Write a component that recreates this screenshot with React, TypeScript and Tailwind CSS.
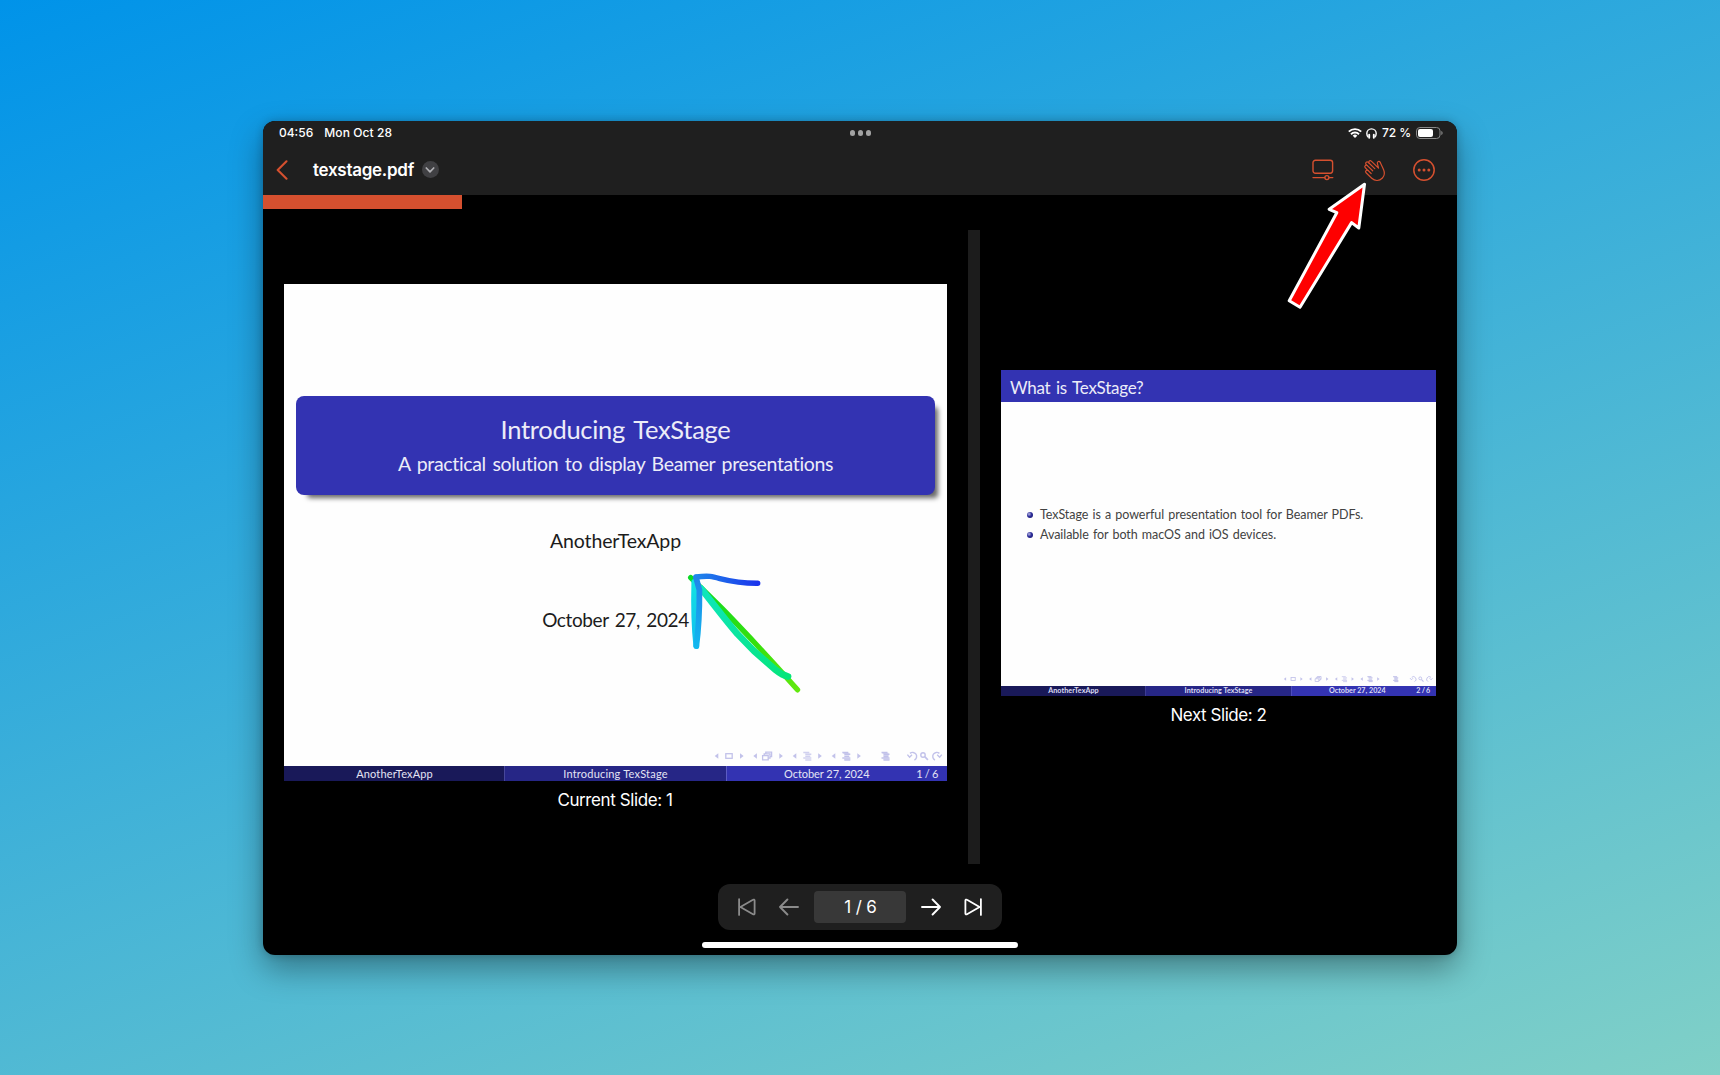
import type { ReactNode } from "react";

const ACCENT = "#d5502f";

function Triangle({ x, dir }: { x: number; dir: "left" | "right" }) {
  return <path d={dir === "left" ? `M${x + 3.6} 3.2v5.6L${x} 6z` : `M${x} 3.2v5.6L${x + 3.6} 6z`} fill="currentColor" />;
}

function Lines({ x, level }: { x: number; level: number }) {
  return (
    <g stroke="currentColor" strokeWidth="1.5" opacity={level === 0 ? 0.75 : 1}>
      <path d={`M${x} 2.4h6M${x + 2} 4.3h6M${x + 2} 6.2h5M${x} 8.1h8M${x + 2} 10h6`} />
      {level > 0 && <path d={`M${x + 1} 3.3h6M${x + 2} 9.1h6`} strokeWidth="0.8" />}
      {level > 1 && <path d={`M${x + 2} 5.2h5M${x + 2} 7.2h5`} strokeWidth="0.8" />}
    </g>
  );
}

function NavSymbols({ className }: { className: string }) {
  return (
    <svg viewBox="0 0 232 12" className={`${className} text-[#c2c2ea]`} fill="none">
      <Triangle x={2.7} dir="left" />
      <rect x="13.8" y="3.7" width="6.4" height="4.6" stroke="currentColor" strokeWidth="1.3" />
      <Triangle x={28} dir="right" />
      <Triangle x={41.3} dir="left" />
      <g stroke="currentColor" strokeWidth="1.3">
        <path d="M50.6 5.6h5.6v4.2h-5.6zM52.2 5.4V3.8h5.8V8.2h-1.6M53.8 3.6V2.2h5.8v4.4H58" />
      </g>
      <Triangle x={67.3} dir="right" />
      <Triangle x={80.7} dir="left" />
      <Lines x={91.3} level={0} />
      <Triangle x={106.2} dir="right" />
      <Triangle x={119.7} dir="left" />
      <Lines x={130.3} level={1} />
      <Triangle x={145.3} dir="right" />
      <Lines x={169.5} level={2} />
      <g stroke="currentColor" strokeWidth="1.4">
        <path d="M198 3.4A4 4 0 1 1 202.4 10M195.4 4.6l2.2 2.6 2.4-2.4" />
        <circle cx="211" cy="5" r="2.2" />
        <path d="M212.7 6.7l3.2 3.2" strokeWidth="1.7" />
        <path d="M227.4 3.4A4 4 0 1 0 223 10M229.8 4.6l-2.2 2.6-2.4-2.4" />
      </g>
    </svg>
  );
}

function StatusBar() {
  return (
    <div className="grid h-6 grid-cols-3 items-center pr-[14px] pl-4 text-[12px] leading-none font-medium text-white">
      <div className="flex gap-[11px]">
        <span>04:56</span>
        <span className="tracking-[0.1px]">Mon Oct 28</span>
      </div>
      <div className="mr-px flex justify-center gap-[2.4px]">
        <span className="size-[5.6px] rounded-full bg-[#a2a2a2]" />
        <span className="size-[5.6px] rounded-full bg-[#a2a2a2]" />
        <span className="size-[5.6px] rounded-full bg-[#a2a2a2]" />
      </div>
      <div className="flex items-center justify-end gap-[4px]">
        <svg viewBox="0 0 14 10" className="h-[10px] w-[14px]" fill="none" stroke="#fff" strokeWidth="1.9">
          <path d="M.8 3.7a8.8 8.8 0 0 1 12.4 0" />
          <path d="M3 6.2a5.7 5.7 0 0 1 8 0" />
          <path d="M4.7 7.7a3.3 3.3 0 0 1 4.6 0L7 10z" fill="#fff" stroke="none" />
        </svg>
        <svg viewBox="0 0 11 11" className="h-[11px] w-[11px]" fill="none" stroke="#fff" strokeWidth="1.4">
          <path d="M2.3 9.3C1.100 8.200.8 6.900.8 5.600a4.700 4.700 0 0 1 9.400 0c0 1.300-.3 2.600-1.500 3.700" />
          <path d="M3.200 6.800v3M7.800 6.800v3" strokeWidth="1.900" strokeLinecap="round" />
        </svg>
        <span className="ml-[1px] tracking-[-0.1px]">72 %</span>
        <svg viewBox="0 0 27 12" className="ml-px h-3 w-[27px]" fill="none">
          <rect x=".5" y=".5" width="23.5" height="11" rx="3.4" stroke="#8a8a8a" />
          <rect x="2" y="2" width="15" height="8" rx="2" fill="#fff" />
          <path d="M25.3 4v4c.8-.3 1.300-1.100 1.300-2s-.5-1.700-1.300-2z" fill="#8a8a8a" />
        </svg>
      </div>
    </div>
  );
}

function TitleBar() {
  return (
    <div className="flex h-[50px] items-center pr-[22px] pb-px pl-[13px]">
      <svg viewBox="0 0 12 20" className="h-5 w-3" fill="none" stroke={ACCENT} strokeWidth="2.1" strokeLinecap="round" strokeLinejoin="round">
        <path d="M10.500 1.300L1.700 10l8.800 8.700" />
      </svg>
      <span className="ml-[25px] pt-px text-[17px] leading-6 font-semibold tracking-[-0.28px] text-white">texstage.pdf</span>
      <span className="ml-[8px] flex size-[17px] items-center justify-center rounded-full bg-[#404043]">
        <svg viewBox="0 0 10 6" className="mt-[1px] h-[6px] w-[10px]" fill="none" stroke="#b0b0b4" strokeWidth="1.7" strokeLinecap="round" strokeLinejoin="round">
          <path d="M1.300 1L5 4.800 8.700 1" />
        </svg>
      </span>
      <div className="ml-auto flex items-center">
        <svg viewBox="0 0 22 22" className="size-[22px]" fill="none" stroke={ACCENT} strokeWidth="1.4" strokeLinecap="round">
          <rect x="1" y="1.2" width="19.6" height="13" rx="2.4" />
          <path d="M1 18.600h11.500M17.300 18.600h3.500" />
          <circle cx="14.9" cy="18.6" r="2" />
        </svg>
        <svg viewBox="0 0 24 24" className="ml-[30px] size-6 overflow-visible" fill="none" stroke={ACCENT} strokeWidth="1.2" strokeLinecap="round" strokeLinejoin="round">
          <g transform="translate(-0.8 -0.4) rotate(-46 12 12)">
            <path d="M3.400 15.500V7.600a1.500 1.500 0 0 1 3 0V3.600a1.500 1.500 0 0 1 3 0V1.900a1.500 1.500 0 0 1 3 0V3.300a1.500 1.500 0 0 1 3 0V13.400l2.600-4.200c1-1.500 3.300-.5 2.700 1.400-1 2.700-1.900 5.200-3 7.600-1.300 2.900-3.500 4.800-6.700 4.800-4.500 0-7.600-3-7.600-7.500z" />
            <path d="M6.400 7.400v4.400M9.400 3.600v7.400M12.400 3.300v7.700" />
          </g>
        </svg>
        <svg viewBox="0 0 22 22" className="ml-[25px] size-[22px]" fill="none" stroke={ACCENT} strokeWidth="1.5">
          <circle cx="11" cy="11" r="10.2" />
          <g fill={ACCENT} stroke="none">
            <circle cx="6.2" cy="11" r="1.5" />
            <circle cx="11" cy="11" r="1.5" />
            <circle cx="15.8" cy="11" r="1.5" />
          </g>
        </svg>
      </div>
    </div>
  );
}

function PointerArrow() {
  return (
    <svg viewBox="0 0 86 132" className="absolute top-[58px] left-[1020px] h-[132px] w-[86px]" fill="#fe0000" stroke="#fff" strokeWidth="3" strokeLinejoin="round">
      <path d="M81.500 5.200L46.200 30.300l7.600 3.400L6.200 121.700l10.800 6.600L68.600 43.600l7.200 5.400z" />
    </svg>
  );
}

function InkDrawing() {
  return (
    <svg viewBox="0 0 120 130" className="absolute top-[286px] left-[400px] h-[130px] w-[120px]" fill="none" strokeWidth="5.4" strokeLinecap="round" strokeLinejoin="round">
      <defs>
        <linearGradient id="green" x1="0" y1="0" x2="1" y2="1">
          <stop offset="0" stopColor="#0bd926" />
          <stop offset="0.6" stopColor="#36e00c" />
          <stop offset="1" stopColor="#62e80e" />
        </linearGradient>
        <linearGradient id="teal" x1="0" y1="0" x2="1" y2="1">
          <stop offset="0" stopColor="#0fe6bd" />
          <stop offset="1" stopColor="#04e57c" />
        </linearGradient>
        <linearGradient id="blue" x1="12" y1="0" x2="74" y2="0" gradientUnits="userSpaceOnUse">
          <stop offset="0" stopColor="#1f86ea" />
          <stop offset="1" stopColor="#1b34ec" />
        </linearGradient>
        <linearGradient id="cyan" x1="0" y1="12" x2="0" y2="78" gradientUnits="userSpaceOnUse">
          <stop offset="0" stopColor="#12e2e2" />
          <stop offset="1" stopColor="#12bdf0" />
        </linearGradient>
        <linearGradient id="sky" x1="0" y1="8" x2="0" y2="78" gradientUnits="userSpaceOnUse">
          <stop offset="0" stopColor="#1f86ea" />
          <stop offset="1" stopColor="#12b8ee" />
        </linearGradient>
      </defs>
      <path d="M6.700 7.600L37 37.500C48 48.500 58 59.500 70 72L93 97 113.500 119.800" stroke="url(#green)" />
      <path d="M104 106.500c-5-1.200-8-3-12-6.300L70 81 53.500 64C43 52 31 36 17 18.500" stroke="url(#teal)" strokeWidth="6.8" />
      <path d="M10.300 12C10 24 10 55 12.300 76" stroke="url(#cyan)" strokeWidth="5.8" />
      <path d="M12.300 76C14.800 58 15.500 34 15.400 20L12 7.500" stroke="url(#sky)" strokeWidth="5.8" />
      <path d="M12 7c5-.6 9-1 14-.6C37 8 47 13.500 73.700 13.300" stroke="url(#blue)" />
    </svg>
  );
}

function CurrentSlide() {
  return (
    <div className="relative flex h-[497px] w-[663px] flex-col bg-[#fefefe] font-['Lato',sans-serif] text-[#1c1c1c]">
      <div className="mx-3 mt-[112px] flex h-[99px] flex-col items-center rounded-[8px] bg-[#3333b2] pt-[17px] whitespace-nowrap text-[#ececf8] shadow-[7px_7px_5px_-4px_rgba(0,0,0,0.6)]">
        <div className="text-[25.5px] leading-8 tracking-[-0.3px] [word-spacing:3px]">Introducing TexStage</div>
        <div className="mt-[5px] text-[19.5px] leading-7 tracking-[-0.35px] [word-spacing:2px]">
          A practical solution to display Beamer presentations
        </div>
      </div>
      <div className="mt-[32px] text-center text-[19.5px] leading-7 tracking-[-0.12px]">AnotherTexApp</div>
      <div className="mt-[51px] text-center text-[19px] leading-7 tracking-[-0.4px] [word-spacing:2px]">October 27, 2024</div>
      <NavSymbols className="mt-auto mr-[3px] mb-1 h-3 w-[232px] self-end" />
      <div className="grid h-[15px] grid-cols-3 text-center text-[11px] leading-[15px] text-[#e4e4f4]">
        <div className="bg-[#191959] tracking-[0.15px]">AnotherTexApp</div>
        <div className="-ml-px border-l border-[#47479a] bg-[#262686] tracking-[0.2px]">Introducing TexStage</div>
        <div className="flex border-l border-[#5c5cc4] bg-[#3333b2]">
          <span className="ml-[57px] tracking-[-0.05px]">October 27, 2024</span>
          <span className="mr-[9px] ml-auto tracking-[-0.3px]">1 / 6</span>
        </div>
      </div>
      <InkDrawing />
    </div>
  );
}

function Bullet({ children }: { children: ReactNode }) {
  return (
    <li className="flex h-[20px] items-center gap-[7px]">
      <span className="size-[6px] rounded-full bg-[radial-gradient(circle_at_35%_35%,#b9b9e6_0%,#2c2c98_45%,#15156a_100%)]" />
      {children}
    </li>
  );
}

function NextSlide() {
  return (
    <div className="flex h-[326px] w-[435px] flex-col bg-[#fefefe] font-['Lato',sans-serif] whitespace-nowrap text-[#424242]">
      <div className="h-8 bg-[#3333b2] pl-[9px] text-[17px] leading-[35px] tracking-[-0.25px] text-[#ececf8] [word-spacing:1.5px]">
        What is TexStage?
      </div>
      <ul className="mt-[103px] ml-[26px] text-[12.5px] tracking-[-0.05px] [word-spacing:1px]">
        <Bullet>TexStage is a powerful presentation tool for Beamer PDFs.</Bullet>
        <Bullet>Available for both macOS and iOS devices.</Bullet>
      </ul>
      <NavSymbols className="mt-auto mr-[2px] mb-[3px] h-[8px] w-[152px] self-end" />
      <div className="grid h-[10px] grid-cols-3 grid-rows-[10px] text-center text-[7.2px] leading-[10px] font-bold text-[#dcdcf2]">
        <div className="bg-[#191959] tracking-[0.05px]">AnotherTexApp</div>
        <div className="-ml-px border-l border-[#3c3c94] bg-[#262686] tracking-[0.05px]">Introducing TexStage</div>
        <div className="flex border-l border-[#4c4cbc] bg-[#3333b2]">
          <span className="ml-[37px]">October 27, 2024</span>
          <span className="mr-[6px] ml-auto tracking-[-0.3px]">2 / 6</span>
        </div>
      </div>
    </div>
  );
}

function SkipIcon({ className }: { className: string }) {
  return (
    <svg viewBox="0 0 18 18" className={`h-[18px] w-[18px] ${className}`} fill="none" stroke="currentColor" strokeWidth="1.8" strokeLinecap="round" strokeLinejoin="round">
      <path d="M1.400 2.600v12.800c0 .9.800 1.300 1.600.8L15.600 9 3 1.800c-.8-.5-1.600-.1-1.600.8zM16.900 1.100v15.800" />
    </svg>
  );
}

function ArrowIcon({ className }: { className: string }) {
  return (
    <svg viewBox="0 0 20 18" className={`h-[18px] w-5 ${className}`} fill="none" stroke="currentColor" strokeWidth="1.9" strokeLinecap="round" strokeLinejoin="round">
      <path d="M1 9h18M11.600 1.500L19 9l-7.400 7.500" />
    </svg>
  );
}

function Pager() {
  return (
    <div className="mx-auto mt-5 flex h-[46px] w-[284px] items-center rounded-[12px] bg-[#1f1f1f] text-white">
      <SkipIcon className="ml-[20px] rotate-180 text-[#8b8b8b]" />
      <ArrowIcon className="ml-[23px] rotate-180 text-[#8b8b8b]" />
      <div className="ml-[15px] flex h-8 w-[92px] items-center justify-center rounded-[4px] bg-[#383838] pt-[2px] pl-px text-[17px] tracking-[-0.1px]">1 / 6</div>
      <ArrowIcon className="ml-[15px]" />
      <SkipIcon className="ml-[23px]" />
    </div>
  );
}

export default function App() {
  return (
    <div className="flex h-[1075px] w-[1720px] items-start justify-center overflow-hidden bg-[linear-gradient(160deg,#0093e9_0%,#80d0c7_100%)] pt-[121px] font-['Inter',sans-serif]">
      <div className="relative flex h-[834px] w-[1194px] flex-col rounded-[12px] bg-black shadow-[0_14px_32px_rgba(0,0,0,0.36),0_0_8px_rgba(0,0,0,0.2)]">
        <header className="h-[74px] rounded-t-[12px] bg-[#1f1f1f]">
          <StatusBar />
          <TitleBar />
        </header>
        <div className="h-[14px]">
          <div className="h-full w-[199px] bg-[#d5502f]" />
        </div>
        <main className="mt-[21px] flex h-[634px]">
          <section className="w-[705px] pt-[54px] pl-[21px]">
            <CurrentSlide />
            <p className="mt-[7px] w-[663px] pr-px text-center text-[17px] leading-6 tracking-[-0.4px] text-white">Current Slide: 1</p>
          </section>
          <div className="w-3 bg-[#1c1c1c]" />
          <section className="pt-[140px] pl-[21px]">
            <NextSlide />
            <p className="mt-[7px] w-[435px] text-center text-[17px] leading-6 tracking-[-0.45px] text-white">Next Slide: 2</p>
          </section>
        </main>
        <Pager />
        <div className="mx-auto mt-[12px] h-[6px] w-[316px] rounded-full bg-white" />
        <PointerArrow />
      </div>
    </div>
  );
}
